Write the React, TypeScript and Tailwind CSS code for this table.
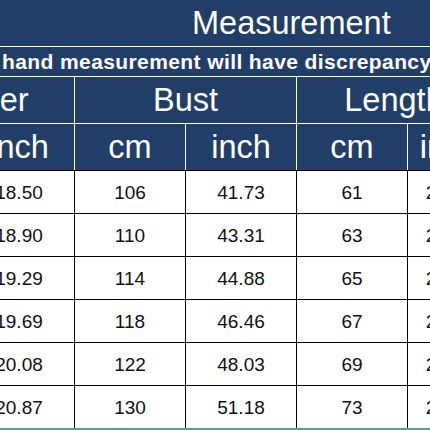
import React from "react";

const NAVY = "bg-[#213e68]";

const rows = [
  ["47", "18.50", "106", "41.73", "61", "24.02"],
  ["48", "18.90", "110", "43.31", "63", "24.80"],
  ["49", "19.29", "114", "44.88", "65", "25.59"],
  ["50", "19.69", "118", "46.46", "67", "26.38"],
  ["51", "20.08", "122", "48.03", "69", "27.17"],
  ["53", "20.87", "130", "51.18", "73", "28.74"],
];

export default function App() {
  return (
    <div
      className="w-[430px] h-[430px] overflow-hidden bg-white"
      style={{ fontFamily: '"Liberation Sans", Arial, sans-serif' }}
    >
      <div className="ml-[-147px] w-[639px] flex flex-col">
        <div className={`${NAVY} h-[47px] border-b-[1.5px] border-white flex items-center pl-[339px] text-white text-[32.5px] leading-none whitespace-nowrap`}>
          Measurement
        </div>
        <div className={`${NAVY} h-[30px] border-b-[1.5px] border-white flex items-center pl-[149px] text-white text-[21px] font-bold leading-none tracking-[0.4px] whitespace-nowrap`}>
          hand measurement will have discrepancy
        </div>
        <div className={`${NAVY} grid grid-cols-[222px_222px_195px] text-white text-[32.5px] leading-none`}>
          {["Shoulder", "Bust", "Length"].map((t) => (
            <div key={t} className="h-[47px] border-r-[1.5px] border-b-[1.5px] border-white flex items-center justify-center whitespace-nowrap">
              {t}
            </div>
          ))}
        </div>
        <div className={`${NAVY} grid grid-cols-[111px_111px_111px_111px_111px_84px] text-white text-[32.5px] leading-none border-b border-black`}>
          {["cm", "inch", "cm", "inch", "cm", "inch"].map((t, i) => (
            <div key={i} className="h-[46px] border-r-[1.5px] border-white flex items-center justify-center whitespace-nowrap">
              {t}
            </div>
          ))}
        </div>
        {rows.map((r, ri) => (
          <div
            key={ri}
            className={`grid grid-cols-[111px_111px_111px_111px_111px_84px] text-[#111] text-[19px] leading-none ${
              ri === rows.length - 1 ? "border-b-[3px] border-b-[#3fae80]" : "border-b border-black"
            }`}
          >
            {r.map((v, ci) => (
              <div key={ci} className="h-[42px] border-r border-black flex items-center justify-center whitespace-nowrap">
                {v}
              </div>
            ))}
          </div>
        ))}
      </div>
    </div>
  );
}
